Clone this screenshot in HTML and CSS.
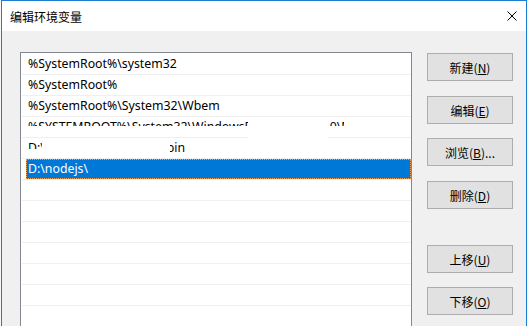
FILE: index.html
```html
<!DOCTYPE html>
<html lang="zh-CN">
<head>
  <meta charset="UTF-8" />
  <title>编辑环境变量</title>
  <link rel="stylesheet" href="styles.css">
</head>
<body>
  <div class="window">
    <div class="titlebar">
      <span class="title">编辑环境变量</span>
      <svg class="close" width="10" height="10" viewBox="0 0 10 10">
        <path d="M0.5 0.5 L9.5 9.5 M9.5 0.5 L0.5 9.5" stroke="#000" stroke-width="1" fill="none" />
      </svg>
    </div>

    <div class="content">
      <div class="list">
        <div class="row"><span class="cell">%SystemRoot%\system32</span></div>
        <div class="row"><span class="cell">%SystemRoot%</span></div>
        <div class="row"><span class="cell">%SystemRoot%\System32\Wbem</span></div>
        <div class="row hidden">
          <span class="cell">%SYSTEMROOT%\System32\WindowsPowerShell\v1.0\Modules\x</span>
          <div class="mask mask-low"></div>
          <div class="mask mask-gap"></div>
          <div class="mask mask-tail"></div>
        </div>
        <div class="row hidden">
          <span class="cell">D:\softwares\programs\bin</span>
          <div class="mask mask-mid"></div>
          <div class="mask mask-low2"></div>
        </div>
        <div class="row selected"><span class="cell">D:\nodejs\</span></div>
        <div class="row"><span class="cell"></span></div>
        <div class="row"><span class="cell"></span></div>
        <div class="row"><span class="cell"></span></div>
        <div class="row"><span class="cell"></span></div>
        <div class="row"><span class="cell"></span></div>
        <div class="row"><span class="cell"></span></div>
        <div class="row"><span class="cell"></span></div>
      </div>

      <div class="buttons">
        <button class="btn b-new">新建(<u>N</u>)</button>
        <button class="btn b-edit">编辑(<u>E</u>)</button>
        <button class="btn b-browse">浏览(<u>B</u>)...</button>
        <button class="btn b-del">删除(<u>D</u>)</button>
        <button class="btn b-up">上移(<u>U</u>)</button>
        <button class="btn b-down">下移(<u>O</u>)</button>
      </div>
    </div>
  </div>
</body>
</html>
```

FILE: styles.css
```css
html, body {
  margin: 0;
  padding: 0;
  height: 100%;
  overflow: hidden;
}
body {
  background: #f7f7f7;
  font-family: "Noto Sans", "Noto Sans CJK SC", sans-serif;
  font-size: 12px;
  color: #000;
}
.window {
  margin-left: 1px;
  width: 524px;
  height: 400px;
  border: 1px solid #1a7fd4;
  border-bottom: none;
  background: #f0f0f0;
}
.titlebar {
  height: 30px;
  background: #fff;
  display: flex;
  align-items: center;
  justify-content: space-between;
  padding: 0 9px 0 8px;
}
.title {
  font-family: "Noto Sans CJK SC", sans-serif;
  font-size: 12px;
  padding-top: 1px;
}
.close {
  display: block;
}
.content {
  display: flex;
  align-items: flex-start;
  padding: 21px 0 0 18px;
}
.list {
  width: 390px;
  height: 340px;
  border: 1px solid #828790;
  background: #fff;
  padding-top: 1px;
}
.row {
  position: relative;
  display: flex;
  height: 20px;
  margin-left: 1px;
  border-bottom: 1px solid #efefef;
}
.cell {
  flex: 1;
  margin-left: 4px;
  padding-left: 2px;
  font-size: 12.3px;
  line-height: 20px;
  white-space: nowrap;
  overflow: hidden;
}
.selected .cell {
  background: #0078d7;
  color: #fff;
  outline: 1px dotted #f2a35a;
  outline-offset: -1px;
}
.mask {
  position: absolute;
  background: #fff;
}
.mask-low {
  left: 0;
  right: 0;
  top: 9px;
  height: 11px;
}
.mask-gap {
  left: 226px;
  width: 80px;
  top: 0;
  height: 21px;
}
.mask-tail {
  left: 322px;
  right: 0;
  top: 0;
  height: 20px;
}
.mask-mid {
  left: 20px;
  width: 128px;
  top: 0;
  height: 20px;
}
.mask-low2 {
  left: 0;
  width: 148px;
  top: 11px;
  height: 9px;
}
.buttons {
  display: flex;
  flex-direction: column;
  margin-left: 15px;
  padding-top: 1px;
}
.btn {
  width: 86px;
  height: 28px;
  padding: 0;
  background: #e1e1e1;
  border: 1px solid #adadad;
  border-radius: 0;
  font-family: "Noto Sans CJK SC", sans-serif;
  font-size: 12px;
  color: #000;
}
.btn u {
  text-underline-offset: 1px;
}
.b-edit { margin-top: 15px; }
.b-browse { margin-top: 14px; }
.b-del { margin-top: 15px; }
.b-up { margin-top: 36px; }
.b-down { margin-top: 14px; }
```
